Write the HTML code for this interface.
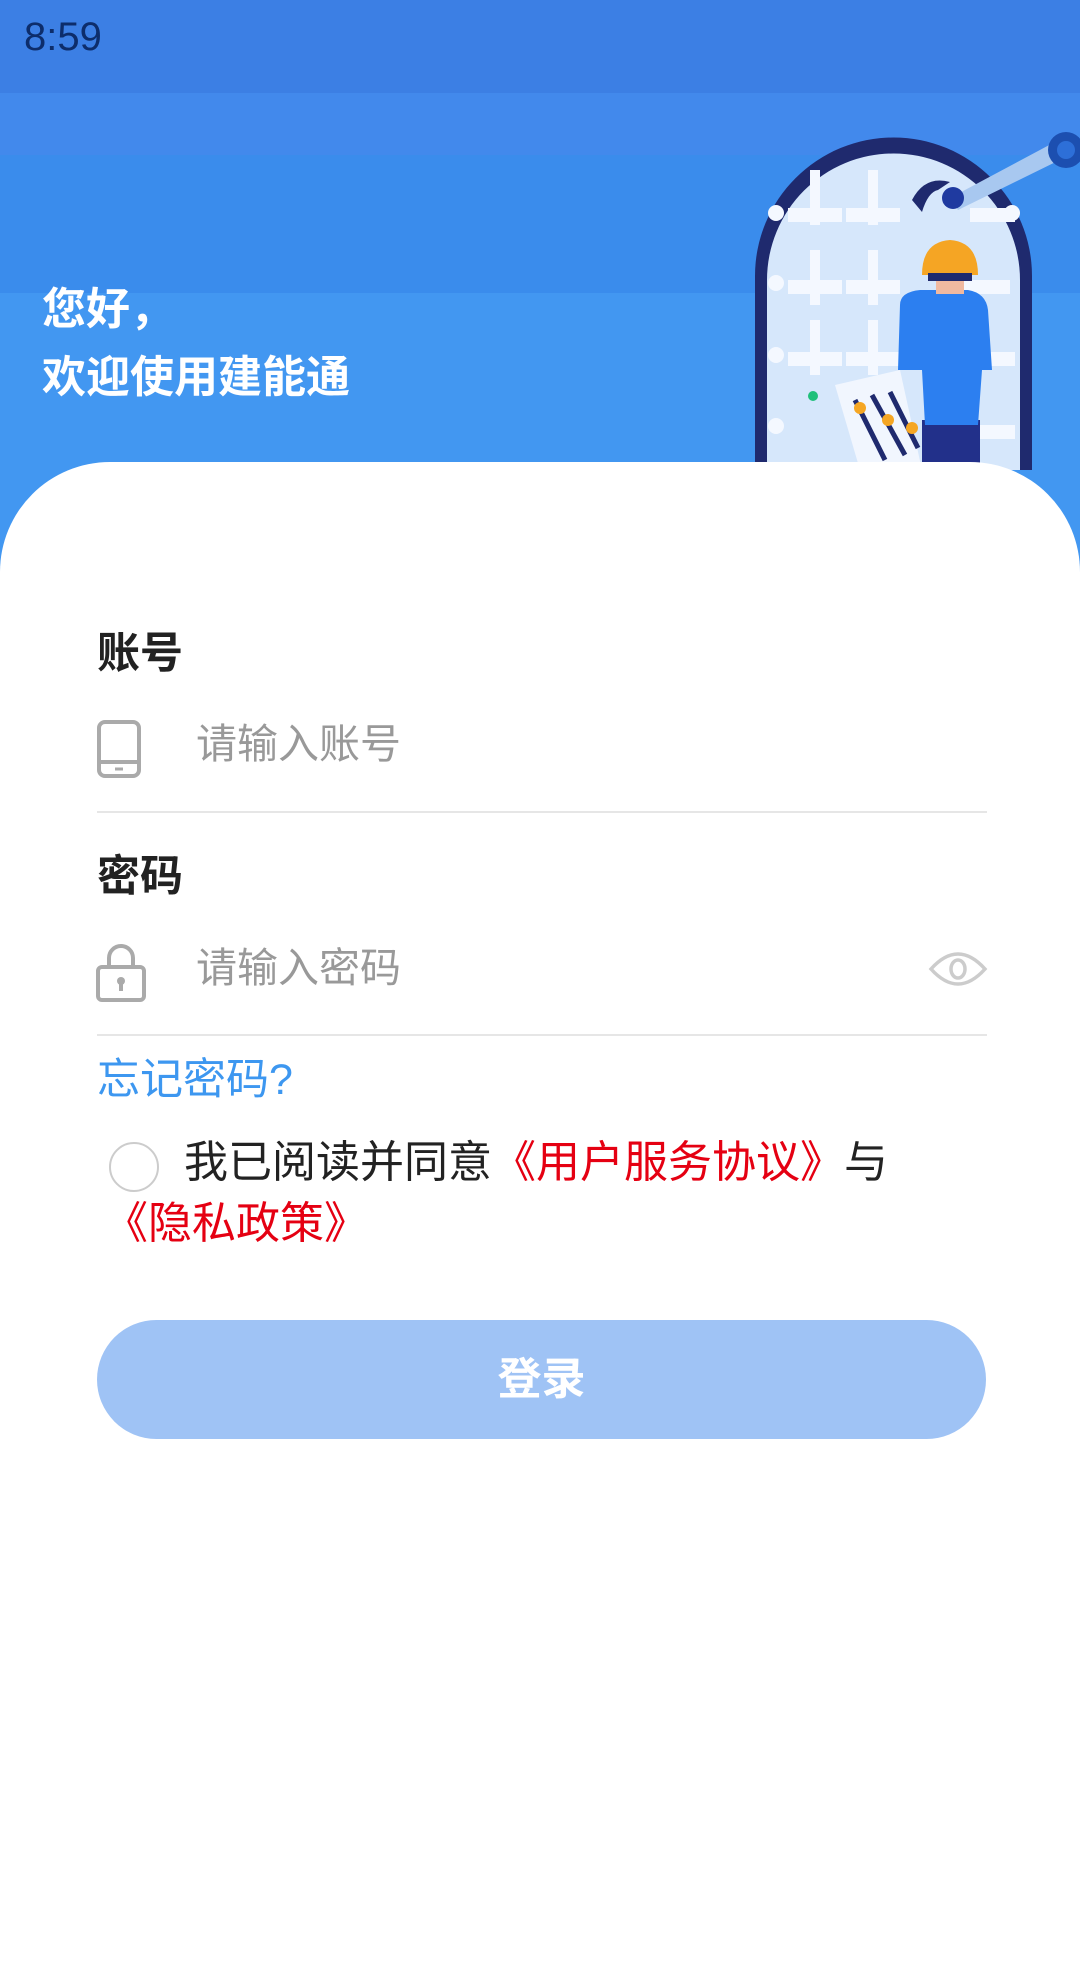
<!DOCTYPE html>
<html><head><meta charset="utf-8"><style>
*{margin:0;padding:0;box-sizing:border-box}
body{width:1080px;height:1920px;position:relative;background:#fff;font-family:"Liberation Sans","Noto Sans CJK SC",sans-serif;overflow:hidden}
.abs{position:absolute}
.t{white-space:nowrap;line-height:1}
</style></head><body>
<div class="abs" style="left:0;top:0;width:1080px;height:95px;background:#3c7fe4"></div>
<div class="abs" style="left:0;top:93px;width:1080px;height:62px;background:#4289ec"></div>
<div class="abs" style="left:0;top:155px;width:1080px;height:138px;background:#3a8cec"></div>
<div class="abs" style="left:0;top:293px;width:1080px;height:350px;background:#4297f1"></div>
<div class="abs t" style="left:24px;top:17px;font-size:40px;color:#0d2d6b">8:59</div>
<div class="abs t" style="left:42px;top:288px;font-size:44px;font-weight:bold;color:#fff">您好，</div>
<div class="abs t" style="left:42px;top:356px;font-size:44px;font-weight:bold;color:#fff">欢迎使用建能通</div>
<svg class="abs" style="left:750px;top:130px" width="330" height="340" viewBox="0 0 330 340">
<path d="M5 340 V146 A138.5 138.5 0 0 1 282 146 V340" fill="#1f2a6e"/>
<path d="M17 340 V150 A126.5 126.5 0 0 1 270 150 V340" fill="#d6e7fb"/>
<g fill="#f4f8ff">
<rect x="60" y="40" width="10" height="55"/><rect x="38" y="78" width="54" height="14"/>
<rect x="118" y="40" width="10" height="55"/><rect x="96" y="78" width="54" height="14"/>
<rect x="60" y="120" width="10" height="55"/><rect x="38" y="150" width="54" height="14"/>
<rect x="118" y="120" width="10" height="55"/><rect x="96" y="150" width="54" height="14"/>
<rect x="200" y="150" width="60" height="14"/>
<rect x="60" y="190" width="10" height="55"/><rect x="38" y="222" width="54" height="14"/>
<rect x="118" y="190" width="10" height="55"/><rect x="96" y="222" width="54" height="14"/>
<rect x="220" y="222" width="45" height="14"/><rect x="220" y="295" width="45" height="14"/>
<rect x="220" y="78" width="45" height="14"/>
<circle cx="26" cy="83" r="8"/><circle cx="26" cy="153" r="8"/><circle cx="26" cy="225" r="8"/><circle cx="26" cy="296" r="8"/><circle cx="262" cy="83" r="8"/>
</g>
<path d="M200 68 L318 5 L326 22 L208 80Z" fill="#a8c8f0"/>
<circle cx="316" cy="20" r="18" fill="#1c4fb0"/><circle cx="316" cy="20" r="9" fill="#2d6fd8"/>
<path d="M162 70 Q175 45 200 52 L188 60 Q178 62 172 82Z" fill="#1f2a6e"/>
<circle cx="203" cy="68" r="11" fill="#1f3aa0"/>
<path d="M85 255 L150 240 L172 340 L110 340Z" fill="#f1f6fe"/>
<g stroke="#1f2a6e" stroke-width="5"><line x1="105" y1="270" x2="135" y2="330"/><line x1="122" y1="265" x2="155" y2="325"/><line x1="140" y1="262" x2="168" y2="318"/></g>
<circle cx="63" cy="266" r="5" fill="#1fc07a"/><circle cx="110" cy="278" r="6" fill="#f5a623"/><circle cx="138" cy="290" r="6" fill="#f5a623"/><circle cx="162" cy="298" r="6" fill="#f5a623"/>
<path d="M172 290 H230 V340 H172Z" fill="#22308a"/>
<path d="M150 175 Q150 162 170 160 H218 Q236 163 238 180 L242 240 H232 L228 295 H175 L172 240 H148Z" fill="#2c7ff0"/>
<rect x="186" y="140" width="28" height="24" fill="#f0b9a0"/>
<path d="M172 145 Q172 112 200 110 Q228 112 228 145Z" fill="#f5a524"/>
<rect x="178" y="143" width="44" height="8" fill="#1f2a6e"/>
</svg>
<div class="abs" style="left:0;top:462px;width:1080px;height:1500px;background:#fff;border-radius:110px 110px 0 0"></div>
<div class="abs t" style="left:97px;top:633px;font-size:43px;font-weight:bold;color:#222">账号</div>
<svg class="abs" style="left:97px;top:720px" width="44" height="58" viewBox="0 0 44 58"><rect x="2" y="2" width="40" height="54" rx="6" fill="none" stroke="#aaa" stroke-width="4"/><line x1="2" y1="42" x2="42" y2="42" stroke="#aaa" stroke-width="4"/><line x1="18" y1="49" x2="26" y2="49" stroke="#aaa" stroke-width="3"/></svg>
<div class="abs t" style="left:196px;top:724px;font-size:41px;color:#999">请输入账号</div>
<div class="abs" style="left:97px;top:811px;width:890px;height:2px;background:#e6e6e6"></div>
<div class="abs t" style="left:97px;top:856px;font-size:43px;font-weight:bold;color:#222">密码</div>
<svg class="abs" style="left:95px;top:942px" width="52" height="60" viewBox="0 0 52 60"><path d="M14 26 V16 A12 12 0 0 1 38 16 V26" fill="none" stroke="#aaa" stroke-width="4"/><rect x="3" y="25" width="46" height="33" rx="4" fill="none" stroke="#aaa" stroke-width="4"/><circle cx="26" cy="39" r="4" fill="#aaa"/><rect x="24" y="39" width="4" height="10" fill="#aaa"/></svg>
<div class="abs t" style="left:196px;top:948px;font-size:41px;color:#999">请输入密码</div>
<svg class="abs" style="left:928px;top:947px" width="60" height="44" viewBox="0 0 60 44"><path d="M3 22 Q30 -8 57 22 Q30 52 3 22Z" fill="none" stroke="#ccc" stroke-width="3.5"/><ellipse cx="30" cy="22" rx="7" ry="9" fill="none" stroke="#ccc" stroke-width="3.5"/></svg>
<div class="abs" style="left:97px;top:1034px;width:890px;height:2px;background:#e6e6e6"></div>
<div class="abs t" style="left:97px;top:1059px;font-size:43px;color:#3d97f0">忘记密码?</div>
<div class="abs" style="left:109px;top:1142px;width:50px;height:50px;border-radius:50%;border:2px solid #ccc"></div>
<div class="abs t" style="left:184px;top:1141px;font-size:44px;color:#222">我已阅读并同意<span style="color:#e50012">《用户服务协议》</span>与</div>
<div class="abs t" style="left:104px;top:1202px;font-size:44px;color:#e50012">《隐私政策》</div>
<div class="abs" style="left:97px;top:1320px;width:889px;height:119px;border-radius:60px;background:#9fc3f5;color:#fff;font-size:44px;font-weight:bold;text-align:center;line-height:119px">登录</div>
</body></html>
